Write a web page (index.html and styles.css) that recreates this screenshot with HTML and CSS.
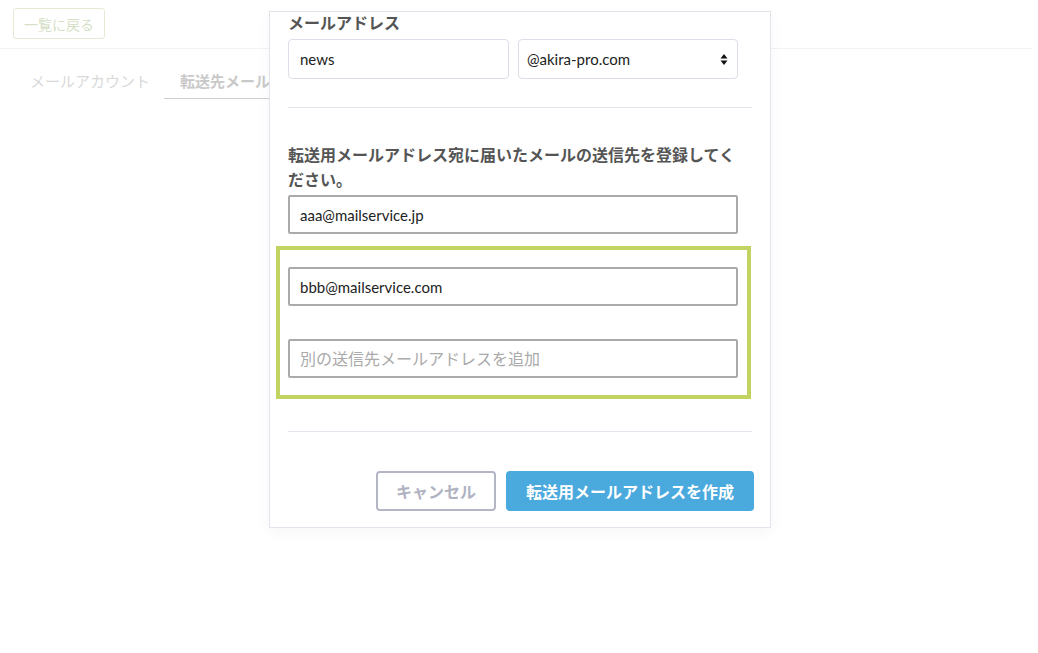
FILE: index.html
```html
<!DOCTYPE html>
<html lang="ja">
<head>
  <meta charset="UTF-8">
  <title>転送用メールアドレスを作成</title>
  <link rel="stylesheet" href="styles.css">
</head>
<body>

  <div class="page">
    <header class="page-header">
      <button type="button" class="back-btn">一覧に戻る</button>
    </header>

    <nav class="tabs">
      <a class="tab">メールアカウント</a>
      <a class="tab active">転送先メールアドレス</a>
    </nav>
  </div>

  <div class="modal">
    <label class="field-label">メールアドレス</label>
    <div class="address-row">
      <input type="text" class="soft-input" value="news">
      <div class="domain-select">
        <span>@akira-pro.com</span>
        <svg width="8" height="13" viewBox="0 0 8 13">
          <path d="M4 1 L7.5 5.5 H0.5 Z" fill="#111"/>
          <path d="M4 12 L7.5 7.5 H0.5 Z" fill="#111"/>
        </svg>
      </div>
    </div>

    <hr class="divider">

    <label class="field-label wide">転送用メールアドレス宛に届いたメールの送信先を登録してください。</label>
    <input type="text" class="dest-input" value="aaa@mailservice.jp">

    <div class="highlight">
      <input type="text" class="dest-input" value="bbb@mailservice.com">
      <input type="text" class="dest-input" placeholder="別の送信先メールアドレスを追加">
    </div>

    <hr class="divider bottom">

    <div class="actions">
      <button type="button" class="btn-cancel">キャンセル</button>
      <button type="button" class="btn-primary">転送用メールアドレスを作成</button>
    </div>
  </div>

</body>
</html>
```

FILE: styles.css
```css
html, body {
  margin: 0;
  padding: 0;
  width: 100%;
  min-height: 100vh;
  background: #fff;
  font-family: Lato, "Noto Sans CJK JP", sans-serif;
}

.page-header {
  height: 49px;
  padding: 8px 13px 0;
  box-sizing: border-box;
  border-bottom: 1px solid #f2f2f2;
  margin-right: 6px;
}
.back-btn {
  height: 31px;
  width: 92px;
  padding: 0;
  background: #fff;
  border: 1px solid #e2ecd3;
  border-radius: 3px;
  color: #d6dfc8;
  font-family: inherit;
  font-size: 14px;
}

.tabs {
  display: flex;
  padding: 15px 14px 0;
}
.tab {
  padding: 0 16px 0 16px;
  height: 34px;
  line-height: 34px;
  font-size: 15px;
  color: #d9d9d9;
}
.tab:first-child {
  padding-right: 14px;
}
.tab.active {
  color: #c9c9c9;
  font-weight: bold;
  border-bottom: 1px solid #d0d0d0;
}

/* dialog over the page */
.modal {
  position: absolute;
  left: 269px;
  top: 11px;
  width: 502px;
  box-sizing: border-box;
  padding: 1px 18px 16px;
  background: #fff;
  border: 1px solid #e3e3eb;
  box-shadow: 0 4px 14px rgba(0,0,0,0.04);
  color: #222;
}

.field-label {
  display: block;
  font-size: 16px;
  line-height: 20px;
  font-weight: bold;
  color: #555;
  margin-bottom: 6px;
}
.field-label.wide {
  max-width: 452px;
  line-height: 25px;
  margin: 0 0 3px;
}

.address-row {
  display: flex;
  gap: 9px;
}
.soft-input,
.domain-select {
  flex: none;
  height: 40px;
  box-sizing: border-box;
  border: 1px solid #dedee8;
  border-radius: 4px;
  font-family: inherit;
  font-size: 15px;
  color: #222;
}
.soft-input {
  width: 221px;
  padding: 0 11px;
  outline: none;
}
.domain-select {
  width: 220px;
  display: flex;
  align-items: center;
  justify-content: space-between;
  padding: 0 9px 0 8px;
}

.divider {
  border: none;
  border-top: 1px solid #e4e4ec;
  margin: 28px 0 34px;
}
.divider.bottom {
  margin: 32px 0 39px;
}

.dest-input {
  display: block;
  width: 450px;
  height: 39px;
  box-sizing: border-box;
  padding: 0 10px;
  border: 2px solid #aaa;
  border-radius: 2px;
  font-family: inherit;
  font-size: 15px;
  color: #222;
  outline: none;
}
.dest-input::placeholder {
  color: #aaa;
  font-size: 16px;
}

.highlight {
  display: flex;
  flex-direction: column;
  gap: 33px;
  margin: 12px 0 0 -12px;
  width: 475px;
  box-sizing: border-box;
  padding: 17px 9px 17px 8px;
  border: 4px solid #c3d362;
}

.actions {
  display: flex;
  justify-content: flex-end;
  gap: 10px;
  margin-right: -2px;
}
.btn-cancel,
.btn-primary {
  height: 40px;
  border-radius: 4px;
  font-family: inherit;
  font-size: 16px;
  font-weight: bold;
}
.btn-cancel {
  width: 120px;
  background: #fff;
  border: 2px solid #b4b6c6;
  color: #b0b2c2;
}
.btn-primary {
  width: 248px;
  background: #4aa9dd;
  border: none;
  color: #fff;
}
```
